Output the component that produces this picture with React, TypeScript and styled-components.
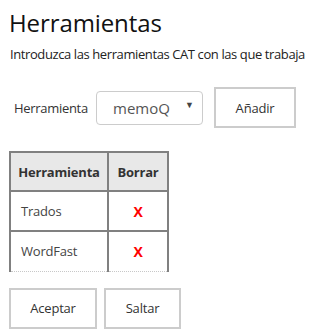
import styled, { createGlobalStyle } from "styled-components";

const GlobalStyle = createGlobalStyle`
  body {
    margin: 0;
    background: #ffffff;
    font-family: "Open Sans", "Noto Sans", sans-serif;
    color: #222222;
  }
`;

const Page = styled.div`
  padding: 8px 9px;
  width: 328px;
  box-sizing: border-box;
`;

const Title = styled.h1`
  font-size: 24px;
  font-weight: 400;
  margin: 0;
  line-height: 30px;
  color: #111111;
  letter-spacing: -0.1px;
`;

const Subtitle = styled.p`
  font-size: 13px;
  margin: 7px 0 0 1px;
  line-height: 18px;
  color: #222222;
  letter-spacing: -0.4px;
`;

const AddRow = styled.div`
  display: flex;
  align-items: center;
  margin-top: 24px;
  padding-left: 5px;
`;

const Label = styled.span`
  font-size: 13px;
  color: #333333;
  width: 82px;
  letter-spacing: -0.3px;
`;

const SelectBox = styled.div`
  width: 107px;
  height: 34px;
  box-sizing: border-box;
  border: 1px solid #cccccc;
  border-radius: 4px;
  display: flex;
  align-items: center;
  justify-content: space-between;
  padding: 0 8px 0 16px;
  font-size: 15px;
  color: #555555;
`;

const Caret = styled.span`
  font-size: 9px;
  color: #444444;
  margin-top: -6px;
`;

const Button = styled.button<{ $width: number }>`
  width: ${(p) => p.$width}px;
  height: 41px;
  box-sizing: border-box;
  background: #ffffff;
  border: 2px solid #cccccc;
  font-family: "Open Sans", "Noto Sans", sans-serif;
  font-size: 13px;
  color: #333333;
  padding: 0;
  letter-spacing: -0.2px;
`;

const AddButton = styled(Button)`
  margin-left: 11px;
`;

const Table = styled.table`
  margin-top: 23px;
  border-collapse: collapse;
  font-size: 13px;
  letter-spacing: -0.2px;
`;

const HeadCell = styled.th<{ $width: number }>`
  width: ${(p) => p.$width}px;
  height: 39px;
  box-sizing: border-box;
  background: #e8e8e8;
  border: 2px solid #808080;
  font-weight: 700;
  color: #333333;
  text-align: center;
  padding: 0;
`;

const Cell = styled.td<{ $center?: boolean; $last?: boolean }>`
  height: 40px;
  box-sizing: border-box;
  border: 2px solid #808080;
  border-bottom: ${(p) => (p.$last ? "1px dotted #c8c8c8" : "2px solid #808080")};
  padding: 0 0 0 10px;
  color: #444444;
  text-align: ${(p) => (p.$center ? "center" : "left")};
  ${(p) => p.$center && "padding: 0;"}
`;

const Delete = styled.span`
  color: #ff0000;
  font-weight: 700;
  font-size: 14px;
`;

const Footer = styled.div`
  display: flex;
  gap: 7px;
  margin-top: 16px;
`;

const tools = ["Trados", "WordFast"];

export default function App() {
  return (
    <>
      <GlobalStyle />
      <Page>
        <Title>Herramientas</Title>
        <Subtitle>Introduzca las herramientas CAT con las que trabaja</Subtitle>
        <AddRow>
          <Label>Herramienta</Label>
          <SelectBox>
            memoQ
            <Caret>▼</Caret>
          </SelectBox>
          <AddButton $width={82}>Añadir</AddButton>
        </AddRow>
        <Table>
          <thead>
            <tr>
              <HeadCell $width={98}>Herramienta</HeadCell>
              <HeadCell $width={60}>Borrar</HeadCell>
            </tr>
          </thead>
          <tbody>
            {tools.map((t, i) => (
              <tr key={t}>
                <Cell $last={i === tools.length - 1}>{t}</Cell>
                <Cell $center $last={i === tools.length - 1}>
                  <Delete>X</Delete>
                </Cell>
              </tr>
            ))}
          </tbody>
        </Table>
        <Footer>
          <Button $width={88}>Aceptar</Button>
          <Button $width={77}>Saltar</Button>
        </Footer>
      </Page>
    </>
  );
}
